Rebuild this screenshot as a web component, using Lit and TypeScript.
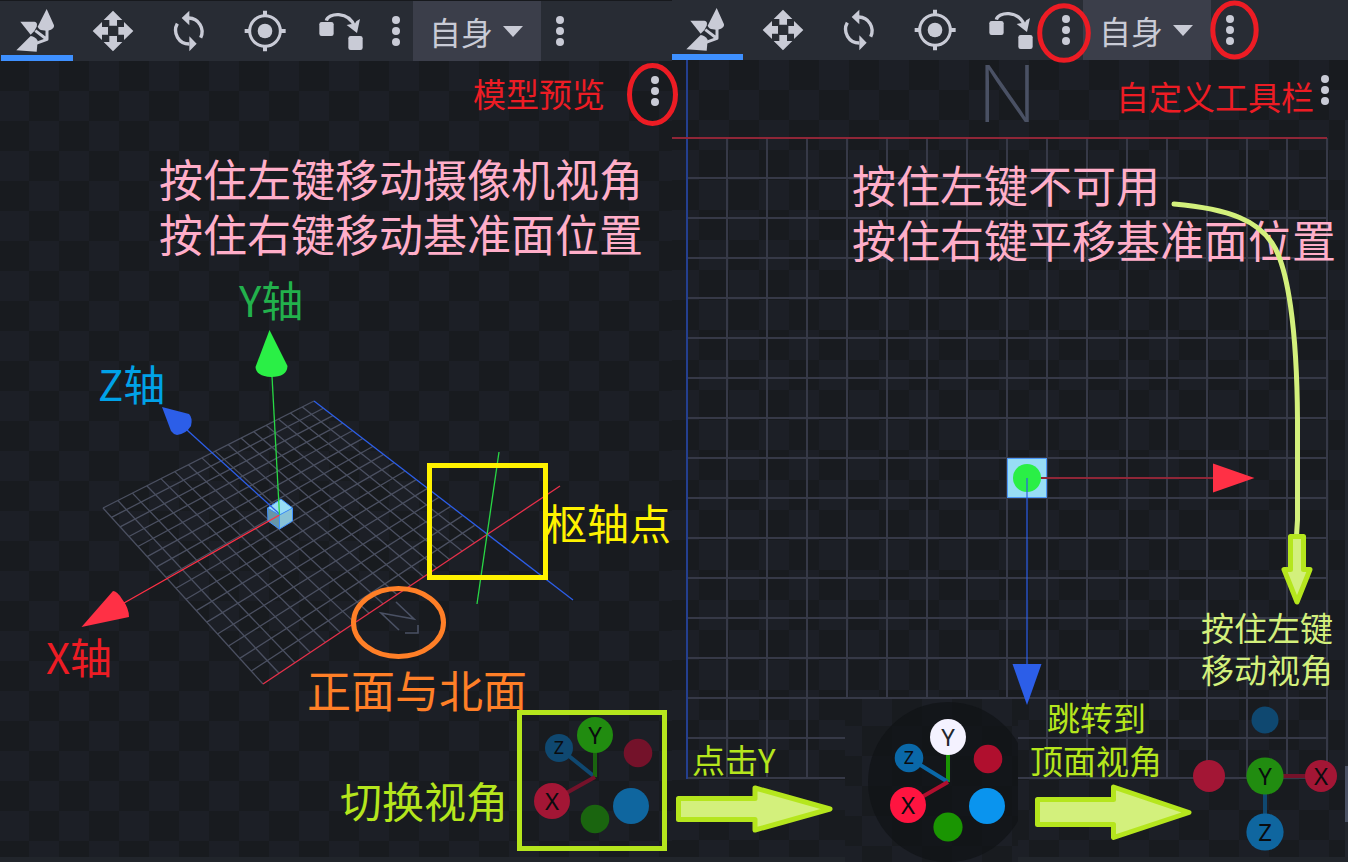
import { LitElement, html, svg, css } from "lit";
import { customElement, property } from "lit/decorators.js";

type Point = [number, number];

/* Maps the unit square onto a quadrilateral in perspective. */
function project(a: Point, b: Point, c: Point, d: Point) {
  const dx1 = b[0] - c[0], dx2 = d[0] - c[0], sx = a[0] - b[0] + c[0] - d[0];
  const dy1 = b[1] - c[1], dy2 = d[1] - c[1], sy = a[1] - b[1] + c[1] - d[1];
  const det = dx1 * dy2 - dx2 * dy1;
  const g = (sx * dy2 - dx2 * sy) / det;
  const h = (dx1 * sy - sx * dy1) / det;
  return (u: number, v: number): Point => {
    const w = g * u + h * v + 1;
    return [
      ((b[0] - a[0] + g * b[0]) * u + (d[0] - a[0] + h * d[0]) * v + a[0]) / w,
      ((b[1] - a[1] + g * b[1]) * u + (d[1] - a[1] + h * d[1]) * v + a[1]) / w,
    ];
  };
}

const steps = (from: number, to: number, by = 1) =>
  Array.from({ length: Math.floor((to - from) / by) + 1 }, (_, i) => from + i * by);

interface Ball { x: number; y: number; r: number; fill: string; label?: string; size?: number; ink?: string; stem?: string; }

/* The small orientation widget: stems run from the centre to each labelled ball. */
const gizmo = (cx: number, cy: number, balls: Ball[]) => svg`
  ${balls.filter((b) => b.stem).map((b) => svg`
    <line x1=${cx} y1=${cy} x2=${b.x} y2=${b.y} stroke=${b.stem} stroke-width="4"/>`)}
  ${balls.map((b) => svg`
    <circle cx=${b.x} cy=${b.y} r=${b.r} fill=${b.fill}/>
    ${b.label ? svg`<text class="ball" x=${b.x} y=${b.y + Math.round((b.size ?? 24) * 0.36)}
      font-size=${b.size ?? 24} fill=${b.ink ?? "#0a0c0f"}>${b.label}</text>` : null}`)}`;

const icons = {
  pivot: svg`<svg viewBox="3 3 216 180" aria-hidden="true">
    <path d="M141 86 V118 L108 130 M139 117 L106 92" fill="none" stroke="currentColor" stroke-width="9" stroke-linejoin="round"/>
    <path d="M140 27 L162 76 Q163 85 153 89 Q142 94 128 91 Q116 89 113 80Z"/>
    <path d="M61 65 L103 65 Q111 66 111 74 L110 80 Q104 96 92 104Z"/>
    <path d="M49 151 L92 108 Q106 110 113 122 L110 155Z"/></svg>`,
  move: svg`<svg viewBox="231 3 216 180" aria-hidden="true">
    <path d="M339 32 L367 60 H351 V77 H328 V60 H311Z M278 93 L306 66 V81 H324 V104 H306 V120Z M400 93 L372 66 V81 H355 V104 H372 V120Z M339 154 L367 126 H351 V108 H328 V126 H311Z"/></svg>`,
  rotate: svg`<svg viewBox="459 3 216 180" aria-hidden="true">
    <path d="M566 54 A41 41 0 0 1 602 113 M532 71 A41 41 0 0 0 568 132" fill="none" stroke="currentColor" stroke-width="10"/>
    <path d="M568 32 L545 54 L568 76Z M568 109 L590 131 L568 154Z"/></svg>`,
  target: svg`<svg viewBox="687 3 216 180" aria-hidden="true">
    <circle cx="795" cy="93" r="46" fill="none" stroke="currentColor" stroke-width="9"/>
    <circle cx="795" cy="93" r="22"/>
    <path d="M789 32h12v14h-12z M789 140h12v14h-12z M734 87h14v12h-14z M843 87h14v12h-14z"/></svg>`,
  swap: svg`<svg viewBox="915 3 216 180" aria-hidden="true">
    <rect x="958" y="66" width="43" height="42" rx="7"/><rect x="1045" y="108" width="43" height="42" rx="7"/>
    <path d="M979 62 C984 38 1046 32 1064 80" fill="none" stroke="currentColor" stroke-width="10"/>
    <path d="M1080 57 L1071 99 L1040 75 L1054 72 L1062 76 L1069 64Z"/></svg>`,
};

const dots = svg`<svg width="8" height="30" viewBox="0 0 8 30" aria-hidden="true">
  <circle cx="4" cy="4" r="4"/><circle cx="4" cy="15" r="4"/><circle cx="4" cy="26" r="4"/></svg>`;

@customElement("tool-bar")
class ToolBar extends LitElement {
  static styles = css`
    :host { display: flex; gap: 4px; height: 60px; background: #282c34; color: #c9cbd6; }
    button { width: 72px; padding: 0; border: 0; background: none; color: inherit; display: grid; place-items: center; }
    button svg { fill: currentColor; display: block; }
    .tool svg { width: 72px; height: 60px; }
    .active { box-shadow: inset 0 -6px #3e90ff; }
    .more { width: 30px; }
    .space { display: grid; align-items: center; width: 128px; margin: 0 0 0 -2px; background: #3b3e4a; }
    select { grid-area: 1 / 1; width: 100%; height: 100%; padding: 0 0 0 16px; border: 0; appearance: none;
      background: none; color: inherit; font: 32px "Noto Sans CJK SC", sans-serif; }
    .caret { grid-area: 1 / 1; justify-self: end; margin-right: 18px; fill: currentColor; pointer-events: none; }
  `;
  render() {
    const tools: [string, unknown][] = [
      ["pivot", icons.pivot], ["move", icons.move], ["rotate", icons.rotate], ["target", icons.target], ["swap", icons.swap],
    ];
    return html`
      ${tools.map(([name, icon], i) => html`
        <button class="tool ${i === 0 ? "active" : ""}" aria-label=${name}>${icon}</button>`)}
      <button class="more" aria-label="more tools">${dots}</button>
      <div class="space">
        <select aria-label="space"><option>自身</option></select>
        <svg class="caret" width="20" height="11" viewBox="0 0 20 11" aria-hidden="true"><path d="M0 0H20L10 11Z"/></svg>
      </div>
      <button class="more" aria-label="more options">${dots}</button>`;
  }
}

@customElement("view-panel")
class ViewPanel extends LitElement {
  @property() kind: "preview" | "top" = "preview";

  static styles = css`
    :host { display: flex; flex-direction: column; min-width: 0; overflow: hidden; }
    .preview { border-top: 1px solid #17191d; padding-left: 1px; }
    .top { margin-left: -1px; }
    .view { flex: 1; min-height: 0; position: relative; z-index: 1;
      background: conic-gradient(#1c1f26 25%, #181b1f 0 50%, #1c1f26 0 75%, #181b1f 0) -1px 0 / 60px 60px; }
    .view.shifted { background-position: -3px 0; }
    .scene { display: block; width: 100%; height: 100%; overflow: visible; }
    .ball { font-family: "Noto Sans", sans-serif; text-anchor: middle; }
    .mark { font-family: Inter, sans-serif; font-weight: 200; text-anchor: middle; }
    .menu { position: absolute; top: 11px; right: 2px; width: 30px; height: 38px; padding: 0; border: 0;
      background: none; fill: #c9cbd6; display: grid; place-items: center; }
    .shifted .menu { right: 8px; }
    .foot { height: 5px; background: #21252b; }
  `;

  private preview() {
    const at = project([103, 508], [314, 401], [487, 535], [263, 684]);
    const rule = (p: Point, q: Point) => svg`<line x1=${p[0]} y1=${p[1]} x2=${q[0]} y2=${q[1]}/>`;
    return svg`<svg class="scene" viewBox="0 61 672 796" preserveAspectRatio="xMinYMin" aria-hidden="true">
      <g stroke="#4b5061" stroke-width="1.3">
        ${steps(0, 15).map((i) => [rule(at(i / 16, 0), at(i / 16, 1)), rule(at(0, i / 16), at(1, i / 16))])}
      </g>
      <path d="M314 401 L573 600" stroke="#2c5ee8" stroke-width="1.3"/>
      <path d="M263 684 L560 486" stroke="#e8304a" stroke-width="1.3"/>
      <path d="M499 452 L477 604" stroke="#28d845" stroke-width="1.3"/>
      <path d="M396 602 L414 619 L381 613 L399 630 M405 633 H418 V625" fill="none" stroke="#4a5164" stroke-width="1.6"/>
      <path d="M281 499 L292.5 508 L279.5 515 L267.5 508Z" fill="#98ddf5"/>
      <path d="M267.5 508 L279.5 515 V529 L268 521Z" fill="#6796a8"/>
      <path d="M292.5 508 L279.5 515 V529 L292.5 521Z" fill="#88c2d6"/>
      <path d="M281 499 L292.5 508 V521 L279.5 529 L268 521 L267.5 508Z M267.5 508 L279.5 515 L292.5 508 M279.5 515 V529" fill="none" stroke="#3e90ff"/>
      <path d="M279.5 515 L124 603" stroke="#ff3045" stroke-width="1.3"/>
      <path d="M279.5 514 L187 430" stroke="#2c5ee8" stroke-width="1.3"/>
      <path d="M279.5 515 L272 376" stroke="#28d845" stroke-width="1.3"/>
      <path d="M81.5 627 L113 591 Q117 591 122 599 Q129 608 129 617Z" fill="#ff3045"/>
      <path d="M162 407 L189 414 Q193 418 191 426 Q186 434 177 435 Q173 434 171 431Z" fill="#2c5ee8"/>
      <path d="M269.5 330 L287.5 366 Q287 377 271 377 Q256 376 255.5 367Z" fill="#2aef46"/>
      ${gizmo(595, 777, [
        { x: 559, y: 748, r: 14, fill: "#0f4870", label: "Z", size: 18, stem: "#0f4870" },
        { x: 595, y: 735, r: 18, fill: "#218c10", label: "Y", stem: "#1a650f" },
        { x: 638, y: 753, r: 14.3, fill: "#74122a" },
        { x: 552, y: 801, r: 18, fill: "#a31635", label: "X", stem: "#74122a" },
        { x: 631, y: 806, r: 18, fill: "#0f669f" },
        { x: 595, y: 819, r: 14.3, fill: "#1a650f" },
      ])}
    </svg>`;
  }

  private top() {
    return svg`<svg class="scene" viewBox="672 60 676 797" preserveAspectRatio="xMinYMin" aria-hidden="true">
      <defs>
        <pattern id="tiles" x="862" y="726" width="60" height="60" patternUnits="userSpaceOnUse">
          <path d="M0 0H60V60H0Z" fill="#1c1f26"/><path d="M0 0H30V30H0Z M30 30H60V60H30Z" fill="#181b1f"/>
        </pattern>
        <clipPath id="inset"><rect x="845" y="699" width="173" height="164"/></clipPath>
      </defs>
      <path d="M1345 120H1348V857H1345Z" fill="#22262d"/>
      <path d="M1345 766H1348V822H1345Z" fill="#4a5164"/>
      <g stroke="#363947" stroke-width="2">
        ${steps(727, 1327, 40).map((x) => svg`<line x1=${x} y1="138" x2=${x} y2="778"/>`)}
        ${steps(178, 778, 40).map((y) => svg`<line x1="687" y1=${y} x2="1328" y2=${y}/>`)}
      </g>
      <path d="M687 60 V779" stroke="#243f8f" stroke-width="2"/>
      <path d="M660 138 H1327" stroke="#8f2637" stroke-width="2"/>
      <text class="mark" x="1007" y="122" font-size="78" fill="#4a5164">N</text>
      <rect x="1007.5" y="458.5" width="39" height="39" fill="#98ddf5" stroke="#4c98f7"/>
      <circle cx="1027" cy="478" r="14" fill="#2aef46"/>
      <path d="M1041 478 H1213" stroke="#8f2637" stroke-width="2"/>
      <path d="M1213 463.5 L1254.5 478 L1213 492.5Z" fill="#ff3045"/>
      <path d="M1027 478 V664" stroke="#2c5ee8" stroke-opacity=".6" stroke-width="2"/>
      <g clip-path="url(#inset)">
        <rect x="845" y="699" width="173" height="164" fill="url(#tiles)"/>
        <circle cx="948" cy="782" r="80" fill="#101216" fill-opacity=".7"/>
      </g>
      <path d="M1012.5 664 H1041.5 L1027 705Z" fill="#2c5ee8"/>
      ${gizmo(948, 782, [
        { x: 948, y: 737, r: 18, fill: "#f4f2ff", label: "Y", ink: "#22262c", stem: "#1a9502" },
        { x: 909, y: 758, r: 14.3, fill: "#0a68a8", label: "Z", size: 18, stem: "#0a68a8" },
        { x: 988, y: 759, r: 14.3, fill: "#b00f2e" },
        { x: 908, y: 805, r: 18, fill: "#ff1440", label: "X", stem: "#b00f2e" },
        { x: 987, y: 806, r: 18, fill: "#0a94ee" },
        { x: 948, y: 827, r: 14.6, fill: "#1a9502" },
      ])}
      ${gizmo(1265, 776, [
        { x: 1265, y: 720, r: 13.5, fill: "#0f4870" },
        { x: 1209, y: 776, r: 16, fill: "#a31635" },
        { x: 1321, y: 776, r: 16, fill: "#a31635", label: "X", stem: "#74122a" },
        { x: 1265, y: 832, r: 18.6, fill: "#0f669f", label: "Z", stem: "#0f4870" },
        { x: 1265, y: 776, r: 18.6, fill: "#218c10", label: "Y" },
      ])}
    </svg>`;
  }

  render() {
    const isTop = this.kind === "top";
    return html`
      <tool-bar class=${this.kind}></tool-bar>
      <div class="view ${isTop ? "shifted" : ""}">
        ${isTop ? this.top() : this.preview()}
        <button class="menu" aria-label="view menu">${dots}</button>
      </div>
      <div class="foot"></div>`;
  }
}

interface Note { x: number; y: number; size: number; color: string; text: string; }

@customElement("app-root")
class AppRoot extends LitElement {
  static styles = css`
    :host { display: grid; grid-template-columns: 672fr 676fr; height: 100vh; position: relative; overflow: hidden; background: #181b1f; }
    .notes { position: absolute; inset: 0; z-index: 2; width: 100%; height: 100%; pointer-events: none; }
    .notes text { font-family: "Noto Sans CJK SC", sans-serif; }
  `;

  private notes: Note[] = [
    { x: 473, y: 107, size: 33, color: "#ed1c24", text: "模型预览" },
    { x: 1116, y: 110, size: 33, color: "#ed1c24", text: "自定义工具栏" },
    { x: 159, y: 197, size: 44, color: "#ffaec9", text: "按住左键移动摄像机视角" },
    { x: 159, y: 252, size: 44, color: "#ffaec9", text: "按住右键移动基准面位置" },
    { x: 852, y: 203, size: 44, color: "#ffaec9", text: "按住左键不可用" },
    { x: 852, y: 258, size: 44, color: "#ffaec9", text: "按住右键平移基准面位置" },
    { x: 239, y: 317, size: 42, color: "#22b14c", text: "Y轴" },
    { x: 98, y: 401, size: 42, color: "#00a2e8", text: "Z轴" },
    { x: 46, y: 674, size: 42, color: "#ed1c24", text: "X轴" },
    { x: 545, y: 540, size: 42, color: "#fff200", text: "枢轴点" },
    { x: 307, y: 708, size: 44, color: "#ff7f27", text: "正面与北面" },
    { x: 340, y: 818, size: 42, color: "#b5e61d", text: "切换视角" },
    { x: 692, y: 773, size: 33, color: "#b5e61d", text: "点击Y" },
    { x: 1047, y: 731, size: 33, color: "#b5e61d", text: "跳转到" },
    { x: 1030, y: 774, size: 33, color: "#b5e61d", text: "顶面视角" },
    { x: 1201, y: 641, size: 33, color: "#d3f07c", text: "按住左键" },
    { x: 1201, y: 683, size: 33, color: "#d3f07c", text: "移动视角" },
  ];

  render() {
    return html`
      <view-panel kind="preview"></view-panel>
      <view-panel kind="top"></view-panel>
      <svg class="notes" viewBox="0 0 1348 862" preserveAspectRatio="xMinYMin">
        ${this.notes.map((n) => svg`<text x=${n.x} y=${n.y} font-size=${n.size} fill=${n.color}>${n.text}</text>`)}
        <g fill="none" stroke-width="5">
          <g stroke="#ed1c24">
            <ellipse cx="652.5" cy="94.5" rx="23" ry="29"/>
            <ellipse cx="1064" cy="33" rx="24.3" ry="27.3"/>
            <ellipse cx="1234.5" cy="30" rx="21.7" ry="27"/>
          </g>
          <ellipse cx="398.5" cy="622.5" rx="45" ry="34" stroke="#ff7f27"/>
          <rect x="429.5" y="465.5" width="116" height="112" stroke="#fff200"/>
          <rect x="519.5" y="712.5" width="145" height="136" stroke="#b5e61d"/>
          <path d="M1174 204 C1232 209 1258 222 1272 243 C1288 266 1297 330 1297.5 420 V520 L1296.5 536" stroke="#d3f07c" stroke-linecap="round"/>
          <g fill="#d3f07c" stroke="#b5e61d" stroke-linejoin="round">
            <path d="M678.5 798.5 H755 V788 L830 809 L755 830 V819.5 H678.5Z"/>
            <path d="M1037.5 799.5 H1113.5 V787 L1189 812.5 L1113.5 837.5 V824.5 H1037.5Z"/>
            <path d="M1290.5 536.5 H1303.5 V569.5 H1310 L1297 602 L1284 569.5 H1290.5Z"/>
          </g>
        </g>
      </svg>`;
  }
}
